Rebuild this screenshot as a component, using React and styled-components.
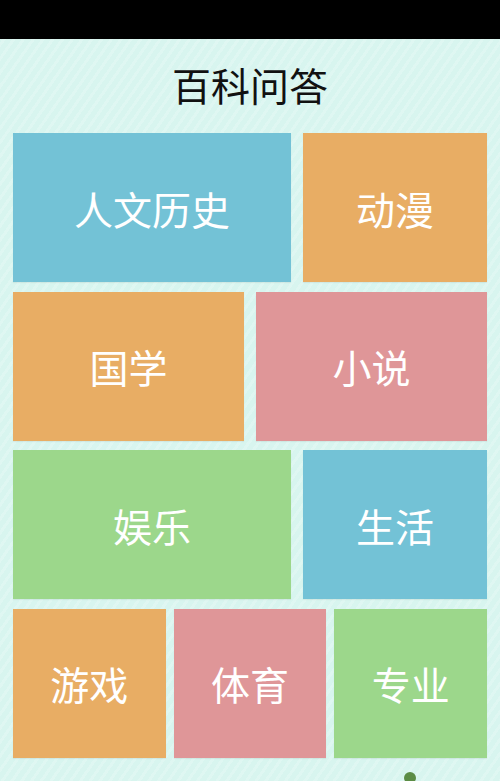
import React from 'react';
import styled, { createGlobalStyle } from 'styled-components';

const GlobalStyle = createGlobalStyle`
  html, body {
    margin: 0;
    padding: 0;
    background: #d9f6f0;
  }
  body {
    font-family: "Noto Sans CJK SC", "Noto Sans", sans-serif;
  }
`;

const colors = {
  blue: '#73c2d6',
  orange: '#e8ad64',
  pink: '#df9698',
  green: '#9cd78b'
};

const rows = [
  { gap: 12, tiles: [{ label: '人文历史', color: 'blue', grow: 278 }, { label: '动漫', color: 'orange', grow: 184 }] },
  { gap: 12, tiles: [{ label: '国学', color: 'orange', grow: 1 }, { label: '小说', color: 'pink', grow: 1 }] },
  { gap: 12, tiles: [{ label: '娱乐', color: 'green', grow: 278 }, { label: '生活', color: 'blue', grow: 184 }] },
  { gap: 8, tiles: [{ label: '游戏', color: 'orange', grow: 1 }, { label: '体育', color: 'pink', grow: 1 }, { label: '专业', color: 'green', grow: 1 }] }
];

export default function App() {
  return (
    <Page>
      <GlobalStyle />
      <StatusBar />
      <Header>百科问答</Header>
      <Grid>
        {rows.map((row, i) => (
          <Row key={i} $gap={row.gap}>
            {row.tiles.map((tile) => (
              <Tile key={tile.label} $color={colors[tile.color]} $grow={tile.grow}>
                {tile.label}
              </Tile>
            ))}
          </Row>
        ))}
      </Grid>
      <Footer>
        <Dot />
      </Footer>
    </Page>
  );
}

const Page = styled.div`
  width: 500px;
  min-height: 781px;
  overflow: hidden;
  background-color: #d8f5ef;
  background-image: repeating-linear-gradient(
    -55deg,
    rgba(255, 255, 255, 0.18) 0px,
    rgba(255, 255, 255, 0.18) 3px,
    rgba(255, 255, 255, 0) 3px,
    rgba(255, 255, 255, 0) 8px
  );
`;

const StatusBar = styled.div`
  height: 39px;
  background: #000;
`;

const Header = styled.h1`
  margin: 0;
  height: 94px;
  padding-bottom: 4px;
  box-sizing: border-box;
  display: flex;
  align-items: center;
  justify-content: center;
  font-size: 39px;
  font-weight: 400;
  color: #111;
`;

const Grid = styled.div`
  display: flex;
  flex-direction: column;
  gap: 9.5px;
  padding: 0 13px;
`;

const Row = styled.div`
  display: flex;
  gap: ${(p) => p.$gap}px;
  height: 149px;
`;

const Tile = styled.div`
  flex: ${(p) => p.$grow} 1 0;
  display: flex;
  align-items: center;
  justify-content: center;
  background: ${(p) => p.$color};
  color: #fff;
  font-size: 39px;
  font-weight: 400;
  box-shadow: 0 1px 1px rgba(0, 0, 0, 0.05);
`;

const Footer = styled.div`
  display: flex;
  padding: 14px 0 0 404px;
`;

const Dot = styled.div`
  width: 12px;
  height: 12px;
  border-radius: 50%;
  background: #5c8c45;
`;
